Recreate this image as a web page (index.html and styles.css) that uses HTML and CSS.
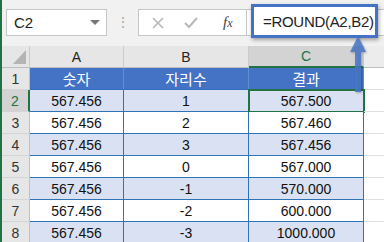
FILE: index.html
```html
<!DOCTYPE html>
<html>
<head>
<meta charset="utf-8">
<link rel="stylesheet" href="styles.css">
</head>
<body>
<div class="app">
  <div class="fbar">
    <div class="namebox"><span>C2</span><span class="dd"></span></div>
    <div class="dots">⋮</div>
    <div class="btns">
      <svg class="ic" width="14" height="14" viewBox="0 0 14 14"><path d="M2 2L12 12M12 2L2 12" stroke="#b8b8b8" stroke-width="1.6" fill="none"/></svg>
      <svg class="ic" width="16" height="14" viewBox="0 0 16 14"><path d="M2 7L6 11L14 2" stroke="#b8b8b8" stroke-width="2" fill="none"/></svg>
      <span class="fx">f<span class="x">x</span></span>
    </div>
    <div class="finput">
      <div class="fhl">=ROUND(A2,B2)</div>
    </div>
  </div>
  <div class="grid">
    <div class="ch corner"><span class="tri"></span></div>
    <div class="ch">A</div>
    <div class="ch">B</div>
    <div class="ch sel">C</div>
    <div class="ch rest"></div>

    <div class="rh">1</div>
    <div class="th">숫자</div>
    <div class="th">자리수</div>
    <div class="th">결과</div>
    <div class="e"></div>

    <div class="rh rsel">2</div>
    <div class="c b">567.456</div>
    <div class="c b">1</div>
    <div class="c b active">567.500</div>
    <div class="e"></div>

    <div class="rh">3</div>
    <div class="c">567.456</div>
    <div class="c">2</div>
    <div class="c">567.460</div>
    <div class="e"></div>

    <div class="rh">4</div>
    <div class="c b">567.456</div>
    <div class="c b">3</div>
    <div class="c b">567.456</div>
    <div class="e"></div>

    <div class="rh">5</div>
    <div class="c">567.456</div>
    <div class="c">0</div>
    <div class="c">567.000</div>
    <div class="e"></div>

    <div class="rh">6</div>
    <div class="c b">567.456</div>
    <div class="c b">-1</div>
    <div class="c b">570.000</div>
    <div class="e"></div>

    <div class="rh">7</div>
    <div class="c">567.456</div>
    <div class="c">-2</div>
    <div class="c">600.000</div>
    <div class="e"></div>

    <div class="rh">8</div>
    <div class="c b">567.456</div>
    <div class="c b">-3</div>
    <div class="c b">1000.000</div>
    <div class="e"></div>
  </div>
  <svg class="arrow" width="24" height="60" viewBox="0 0 24 60">
    <path d="M12 0L20 16L15 16L15 56L9 56L9 16L4 16Z" fill="#4a78c8" fill-opacity="0.85"/>
  </svg>
</div>
</body>
</html>
```
FILE: styles.css
```css
* { box-sizing: border-box; }
html, body { margin: 0; padding: 0; }
body {
  width: 384px; height: 242px; overflow: hidden; background: #fff;
  font-family: "Liberation Sans", Arial, "Noto Sans CJK KR", sans-serif;
}
.app {
  position: relative;
  width: 384px; height: 242px;
  border-left: 2px solid #217346;
}
.fbar {
  height: 46px;
  background: #f1f1f1;
  display: flex;
  align-items: flex-start;
  padding: 9px 0 0 4px;
}
.namebox {
  width: 101px; height: 27px;
  background: #fff; border: 1px solid #c6c6c6;
  display: flex; align-items: center; justify-content: space-between;
  padding: 0 6px 0 7px;
  font-size: 15px; color: #222;
}
.dd {
  width: 0; height: 0;
  border-left: 5px solid transparent; border-right: 5px solid transparent;
  border-top: 5px solid #777;
}
.dots {
  width: 31px; text-align: center; color: #aaa; font-size: 14px; line-height: 27px;
}
.btns {
  width: 109px; height: 27px;
  background: #fff; border: 1px solid #c6c6c6;
  display: flex; align-items: center;
  padding: 0 0 0 12px;
}
.btns .ic:first-child { margin-right: 18px; }
.btns .ic:nth-child(2) { margin-right: 24px; }
.fx {
  font-family: "Liberation Serif", serif; font-style: italic; font-size: 15px; color: #444;
}
.fx .x { font-size: 12px; }
.finput {
  flex: 1; height: 27px; background: #fff; border-top: 1px solid #c6c6c6; border-bottom: 1px solid #c6c6c6;
  position: relative;
}
.fhl {
  position: absolute; left: 4px; top: -6px;
  width: 127px; height: 34px;
  border: 3px solid #4472c4; background: #fff;
  box-shadow: 1px 2px 4px rgba(0,0,0,0.35);
  font-size: 15px; color: #222;
  display: flex; align-items: center; padding-left: 9px;
  letter-spacing: -0.3px;
}
.grid {
  display: grid;
  grid-template-columns: 28px 94px 125px 115px 1fr;
  grid-template-rows: 22px repeat(8, 22px);
  font-size: 14px; color: #111;
}
.ch {
  background: #e6e6e6;
  border-right: 1px solid #cbcbcb; border-bottom: 1px solid #bdbdbd;
  display: flex; align-items: center; justify-content: center;
  color: #222; font-size: 14px;
}
.ch.sel { background: #d3d3d3; color: #217346; border-bottom: 2px solid #217346; }
.ch.rest { border-right: none; background: #ececec; }
.corner { position: relative; }
.tri {
  position: absolute; right: 3px; bottom: 3px;
  width: 13px; height: 14px; background: #b4b4b4;
  clip-path: polygon(100% 0, 100% 100%, 0 100%);
}
.rh {
  background: #e6e6e6;
  border-right: 1px solid #c0c0c0; border-bottom: 1px solid #d4d4d4;
  display: flex; align-items: center; justify-content: center;
  color: #333; font-size: 14px;
}
.rh.rsel { background: #d3d3d3; color: #217346; border-right: 2px solid #217346; }
.th {
  background: #4472c4; color: #fff;
  border-right: 1px solid #5b8fd6; border-bottom: 1px solid #2f6fba;
  display: flex; align-items: center; justify-content: center;
  font-family: "Noto Sans CJK KR", sans-serif; font-size: 15px;
}
.c {
  border-right: 1px solid #2f75b5; border-bottom: 1px solid #2f75b5;
  display: flex; align-items: center; justify-content: center;
  background: #fff;
}
.c.b { background: #d9e1f2; }
.c.active { outline: 2px solid #217346; outline-offset: -1px; }
.e { border-bottom: 1px solid #e1e1e1; }
.arrow {
  position: absolute; left: 344px; top: 36px;
  filter: drop-shadow(1px 1px 1px rgba(0,0,0,0.3));
}
```
